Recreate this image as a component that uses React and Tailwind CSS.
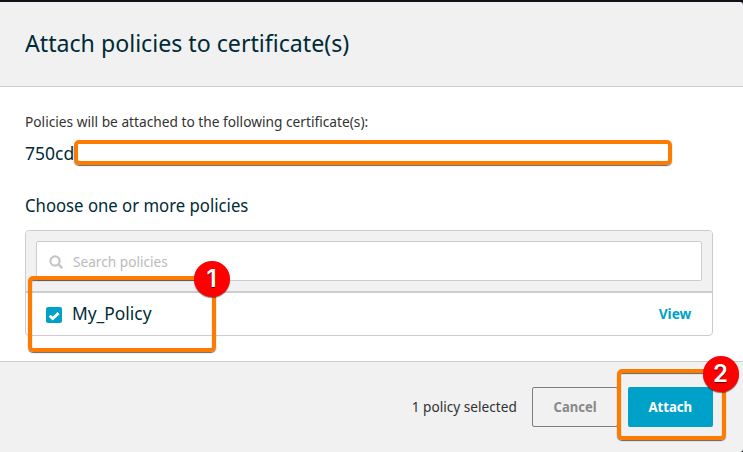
import React from "react";

const frame = "rounded-[5px] border-4 border-[#ff7b00] shadow-[0_1px_1px_rgba(0,0,0,0.6)]";
const callout = "rounded-[5px] border-4 border-[#ff7b00] shadow-[0_1px_1px_rgba(0,0,0,0.6),inset_0_1px_1px_rgba(0,0,0,0.6)]";
const badge = "absolute flex size-9 items-center justify-center rounded-full bg-[#fe0000] font-['Inter',sans-serif] text-[24px] font-semibold leading-none text-white shadow-[0_1px_1px_rgba(0,0,0,0.5)] [text-shadow:0_1px_1px_rgba(0,0,0,0.6)]";

function SearchIcon() {
  return (
    <svg className="mt-0.5 size-[14px] shrink-0" viewBox="0 0 14 14" fill="none" stroke="#c6c6c6">
      <circle cx="6" cy="6" r="4.6" strokeWidth="2.2" />
      <path d="M9.4 9.4 L12.4 12.4" strokeWidth="2.6" strokeLinecap="round" />
    </svg>
  );
}

function CheckBox() {
  return (
    <span className="mt-px flex size-4 shrink-0 items-center justify-center rounded-[2px] bg-[#00a1c9]">
      <svg className="size-4" viewBox="0 0 16 16" fill="none" stroke="white" strokeWidth="2.8">
        <path d="M3.7 8.8 L6.7 11.5 L12.6 6.1" />
      </svg>
    </span>
  );
}

export default function App() {
  return (
    <div className="relative flex h-[452px] w-[743px] flex-col overflow-hidden whitespace-nowrap bg-[#101418] pt-0.5 font-['Noto_Sans',sans-serif] text-[#002b36]">
      <header className="flex h-[85px] shrink-0 items-center rounded-tr-[3px] border-b border-[#ccc] bg-[#f1f1f1] pb-0.5 pl-[25px]">
        <h1 className="text-[23.5px] leading-8"><span className="inline-block origin-left scale-x-[0.985]">Attach policies to certificate(s)</span></h1>
      </header>
      <main className="flex h-[274px] shrink-0 flex-col bg-white pl-[25px] pr-[30px] pt-[25px]">
        <p className="h-5 text-[14px] leading-5 text-[#333]"><span className="inline-block origin-left scale-x-[0.98]">Policies will be attached to the following certificate(s):</span></p>
        <div className="mt-[7px] flex h-[26px] items-center">
          <span className="w-[49px] pt-0.5 text-[17.5px] leading-6"><span className="inline-block origin-left">750cd</span></span>
          <div className={`h-[25px] w-[598px] ${frame}`} />
        </div>
        <h2 className="mt-[28px] h-6 text-[17.5px] leading-6"><span className="inline-block origin-left scale-x-[0.955]">Choose one or more policies</span></h2>
        <section className="mt-[13px] h-[106px] w-[688px] overflow-hidden rounded-[4px] border border-[#ccc]">
          <div className="h-[62px] border-b-2 border-[#ccc] bg-[#f1f1f1] p-[10px] pb-0">
            <div className="flex h-10 items-center gap-[10px] rounded-[2px] border border-[#ccc] bg-white pl-3 text-[14px] text-[#bbb]">
              <SearchIcon />
              <span className="inline-block origin-left scale-x-[0.975]">Search policies</span>
            </div>
          </div>
          <div className="flex h-[42px] items-center pl-5 pr-[21px]">
            <CheckBox />
            <span className="ml-[10px] inline-block origin-left scale-x-[0.965] pb-px text-[18px]">My_Policy</span>
            <span className="ml-auto inline-block origin-right scale-x-[0.98] pb-0.5 text-[14px] font-bold text-[#00a1c9]">View</span>
          </div>
        </section>
      </main>
      <footer className="flex h-[91px] shrink-0 items-center justify-end rounded-br-[3px] border-t border-[#ccc] bg-[#f1f1f1] pr-[30px] text-[14px]">
        <span className="mr-[15px] inline-block origin-right scale-x-[0.975] pb-0.5 text-[#333]">1 policy selected</span>
        <button className="flex h-10 w-[86px] items-center justify-center rounded-[2px] border border-[#7d7d7d] pb-0.5 font-bold text-[#888]"><span className="inline-block scale-x-[0.93]">Cancel</span></button>
        <button className="ml-[10px] flex h-10 w-[85px] items-center justify-center rounded-[2px] bg-[#00a1c9] pb-0.5 font-bold text-white"><span className="inline-block scale-x-[0.94]">Attach</span></button>
      </footer>

      <div className={`absolute left-[28px] top-[276px] h-[76px] w-[188px] ${callout}`} />
      <div className={`${badge} left-[193.5px] top-[261px]`}>1</div>
      <div className={`absolute left-[617px] top-[369px] h-[71px] w-[109px] ${callout}`} />
      <div className={`${badge} left-[702.5px] top-[356px]`}>2</div>
    </div>
  );
}
